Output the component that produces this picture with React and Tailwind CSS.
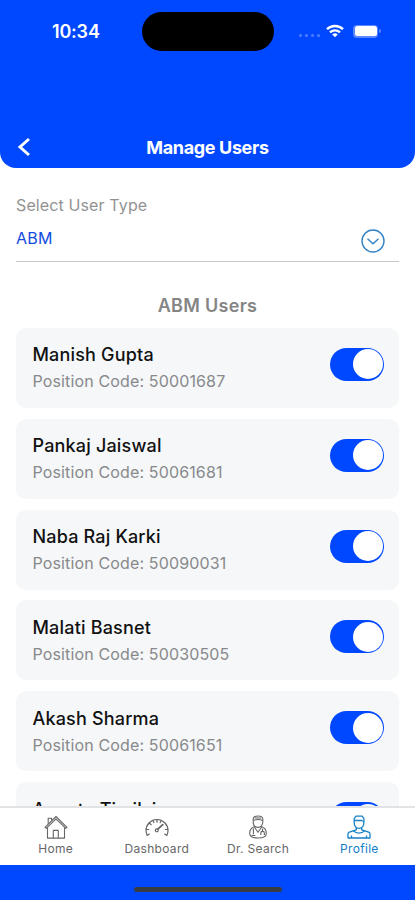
import React, { useState } from 'react';

const initialUsers = [
  { name: 'Manish Gupta', code: '50001687', active: true },
  { name: 'Pankaj Jaiswal', code: '50061681', active: true },
  { name: 'Naba Raj Karki', code: '50090031', active: true },
  { name: 'Malati Basnet', code: '50030505', active: true },
  { name: 'Akash Sharma', code: '50061651', active: true },
  { name: 'Ananta Timilsina', active: true },
];

const HomeIcon = () => (
  <svg viewBox="0 0 24 24" className="w-6 h-6" fill="none" stroke="currentColor" strokeWidth="1.1" strokeLinejoin="round">
    <path d="M1 12.3 12 1.5l11 10.8-1.2 1.1L12 3.9l-9.8 9.5z" />
    <path d="M3.5 12.2v10.9h17V12.2M9.3 23v-7.6h5V23M4.2 9V3.2h3.4v2.4" />
  </svg>
);

const DashboardIcon = () => (
  <svg viewBox="0 0 24 24" className="w-6 h-6" fill="none" stroke="currentColor" strokeWidth="1.2" strokeLinecap="round">
    <path d="M2.2 20.2A11 11 0 0 1 1 15.5a11 11 0 0 1 22 0c0 1.7-.4 3.2-1.2 4.7" />
    <path d="m2.2 20.2 2-1.1M21.8 20.2l-2-1.1M1.2 14.5h2.5M22.8 14.5h-2.5M4.4 8l1.8 1.700M8 5.600l.8 2M12 4.700v2.500M16 5.600l-.8 2" />
    <path d="m17.800 9.600-5 4.500" strokeWidth="1.8" />
    <circle cx="11.800" cy="15.300" r="1.500" />
  </svg>
);

const DoctorIcon = () => (
  <svg viewBox="0 0 24 24" className="w-6 h-6" fill="none" stroke="currentColor" strokeWidth="1.1" strokeLinejoin="round">
    <path d="M7.2 7V4.200C7.200 2 9 1 12 1s4.800 1 4.800 3.200V7c0 3.200-2 5.400-4.800 5.400S7.200 10.200 7.200 7z" />
    <path d="M7.200 5.600c3.200-1.400 6.400-1.400 9.600 0M9 3h6" />
    <path d="M9 11.500c-3.200.7-5.300 3.300-5.300 7 0 3 3.200 4.500 8.300 4.500s8.300-1.500 8.300-4.500c0-3.700-2.100-6.300-5.300-7" />
    <path d="m8.300 12 3.700 5.300 3.700-5.300M7.400 13.500v5.800M16.600 13.500v2.700m-1.800 3.800v-1.800a1.800 1.800 0 0 1 3.600 0V20M5.500 20.500h3.800" />
  </svg>
);

const ProfileIcon = () => (
  <svg viewBox="0 0 24 24" className="w-6 h-6" fill="none" stroke="currentColor" strokeWidth="1.3" strokeLinejoin="round">
    <path d="M7.200 7V3.600L9 1.200h6.200l1.700 2.400V7c0 3.600-1.700 6.400-4.900 6.400S7.200 10.600 7.200 7z" />
    <path d="M7.200 5.500h7.500l2.200 1M9.300 12.500v2.300l-7 2.400c-.8.300-1.300.9-1.300 1.700V23h22v-4.100c0-.8-.5-1.400-1.300-1.700l-7-2.400v-2.300" />
    <path d="M6.500 15.900c2.600 2.900 8.400 2.900 11 0M4.500 20.500V23M19.500 20.500V23" />
  </svg>
);

const tabs = [
  { label: 'Home', icon: HomeIcon },
  { label: 'Dashboard', icon: DashboardIcon },
  { label: 'Dr. Search', icon: DoctorIcon },
  { label: 'Profile', icon: ProfileIcon },
];

const StatusBar = () => (
  <div className="flex items-start pt-3 pl-[52px]">
    <span className="w-[90px] pt-[7px] text-[18px] leading-[26px] font-semibold tracking-[-0.2px]">10:34</span>
    <div className="w-[132px] h-[39px] rounded-full bg-black" />
    <div className="flex items-center ml-[25px] pt-[12px]">
      <div className="flex gap-[3px] mt-[8px] mr-[6px]">
        {[0, 1, 2, 3].map((dot) => (
          <span key={dot} className="w-[3px] h-[3px] rounded-full bg-white/30" />
        ))}
      </div>
      <svg viewBox="0 0 18 13" className="w-[18px] h-[14px] shrink-0" fill="none" stroke="white" strokeWidth="2.4">
        <path d="M1 4.700a11.500 11.500 0 0 1 16 0M4 7.900a7.300 7.300 0 0 1 10 0" />
        <path d="M9 12.800 6.200 10a4 4 0 0 1 5.600 0z" fill="white" stroke="none" />
      </svg>
      <div className="ml-[9px] w-[25px] h-[13px] rounded-[4px] bg-white/35 p-[1.5px] shrink-0">
        <div className="h-full rounded-[2.5px] bg-white" />
      </div>
      <span className="ml-px w-[2px] h-[4px] rounded-r-full bg-white/35 shrink-0" />
    </div>
  </div>
);

const UserCard = ({ user, onToggle }) => (
  <div className="flex items-start justify-between h-[80px] shrink-0 rounded-[10px] bg-[#f5f7f9] pl-[16.5px] pr-[15px]">
    <div className="pt-[14.6px]">
      <p className="text-[18px] leading-[26px] font-medium text-[#111111] tracking-[0.18px]">{user.name}</p>
      {user.code && (
        <p className="text-[16px] leading-[27px] text-[#88898b] tracking-[0.14px]">Position Code: {user.code}</p>
      )}
    </div>
    <button
      role="switch"
      aria-checked={user.active}
      aria-label={user.name}
      onClick={onToggle}
      className={`mt-[20px] flex items-center w-[54px] h-[33px] rounded-full px-[1.5px] ${user.active ? 'justify-end bg-[#0048ff]' : 'justify-start bg-gray-300'}`}
    >
      <span className="w-[30px] h-[30px] rounded-full bg-white" />
    </button>
  </div>
);

const App = () => {
  const [users, setUsers] = useState(initialUsers);
  const [activeTab, setActiveTab] = useState('Profile');

  const toggleUser = (index) => {
    setUsers(users.map((user, i) => (i === index ? { ...user, active: !user.active } : user)));
  };

  return (
    <div className="flex flex-col w-full h-screen overflow-hidden bg-white font-['Inter',sans-serif]">
      {/* Header */}
      <header className="flex flex-col justify-between h-[168px] shrink-0 rounded-b-[16px] bg-[#0048ff] text-white">
        <StatusBar />
        <div className="grid grid-cols-[48px_1fr_48px] items-center h-[42px]">
          <button aria-label="Back" className="pl-[17px]">
            <svg viewBox="0 0 14 20" className="w-[14px] h-[20px]" fill="none" stroke="currentColor" strokeWidth="3">
              <path d="m12 2-9 8 9 8" />
            </svg>
          </button>
          <h1 className="pt-[2px] text-center text-[18px] leading-[26px] font-bold tracking-[-0.35px]">Manage Users</h1>
        </div>
      </header>

      <main className="flex flex-col flex-1 min-h-0 overflow-hidden px-4">
        {/* User type */}
        <div className="flex flex-col h-[94px] shrink-0 border-b border-[#c8c8c8] pt-[24px]">
          <label className="text-[16px] leading-[26px] text-[#929292] tracking-[0.12px]">Select User Type</label>
          <button className="flex justify-between pt-[8px] pr-[14.5px] text-left">
            <span className="text-[16px] leading-[25px] text-[#124ce0] tracking-[0.2px]">ABM</span>
            <svg viewBox="0 0 24 24" className="w-6 h-6 mt-[2.5px] text-[#3183c5]" fill="none" stroke="currentColor" strokeWidth="1.4">
              <circle cx="12" cy="12" r="11" />
              <path d="m6.500 9.800 5.500 5 5.500-5" />
            </svg>
          </button>
        </div>

        {/* Users */}
        <h2 className="shrink-0 pt-[31px] pb-[8.8px] text-center text-[18px] leading-[26px] font-semibold tracking-[0.3px] text-[#858585]">ABM Users</h2>
        <div className="flex flex-col gap-[10.9px]">
          {users.map((user, index) => (
            <UserCard key={user.name} user={user} onToggle={() => toggleUser(index)} />
          ))}
        </div>
      </main>

      {/* Bottom navigation */}
      <nav className="grid grid-cols-4 h-[59px] shrink-0 border-t-2 border-[#e2e3e5] bg-white px-[5px]">
        {tabs.map(({ label, icon: Icon }) => (
          <button
            key={label}
            onClick={() => setActiveTab(label)}
            className={`flex flex-col items-center pt-[7px] ${activeTab === label ? 'text-[#1680c8]' : 'text-[#666666]'}`}
          >
            <Icon />
            <span className="mt-[2px] text-[12px] leading-[16px] tracking-[0.3px]">{label}</span>
          </button>
        ))}
      </nav>
      <footer className="flex justify-center h-[35px] shrink-0 bg-[#0048ff] pt-[22px]">
        <div className="w-[148px] h-[5px] rounded-full bg-[#383c43]" />
      </footer>
    </div>
  );
};

export default App;
